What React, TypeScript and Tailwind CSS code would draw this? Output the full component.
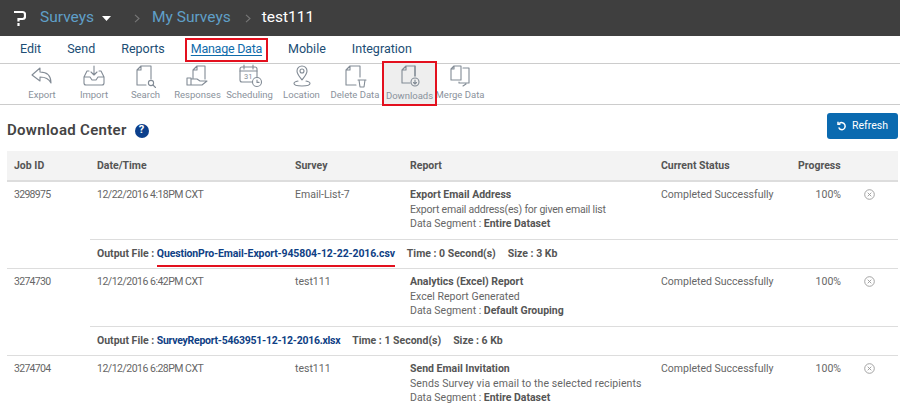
import React from "react";

const font = "font-['Roboto',sans-serif]";

function Ico({ children }: { children: React.ReactNode }) {
  return (
    <svg width="26" height="26" viewBox="0 0 26 26" fill="none" stroke="#828b95" strokeWidth="1.1" strokeLinejoin="round" strokeLinecap="round">
      {children}
    </svg>
  );
}

const tools: { label: string; icon: React.ReactNode; w: string }[] = [
  { label: "Export", w: "w-[52px]", icon: <Ico><path d="M11 5L3 12l8 6v-4c6 0 9 2 11 6 0-7-4-11-11-11z" /></Ico> },
  { label: "Import", w: "w-[52px]", icon: <Ico><path d="M8 8H6l-3 6v6a2 2 0 002 2h16a2 2 0 002-2v-6l-3-6h-2M3 14h6l2 3h4l2-3h6M13 3v9M10 9l3 3 3-3" /></Ico> },
  { label: "Search", w: "w-[51px]", icon: <Ico><path d="M8 3h10v13M8 3L4 7v15h9M8 3v4H4" /><circle cx="18" cy="20" r="2.6" /><path d="M20 22l2.500 2.500" /></Ico> },
  { label: "Responses", w: "w-[53px]", icon: <Ico><path d="M12 3h8v13M12 3l-4 4v8M12 3v4H8M2 15h4v7H2zM6 16h6l3 2h7l-5 4H6" /></Ico> },
  { label: "Scheduling", w: "w-[51px]", icon: <Ico><rect x="3" y="4" width="17" height="15" rx="2" /><path d="M3 8h17M7 2v4M16 2v4" /><circle cx="20" cy="19" r="4.500" fill="#fff" /><path d="M20 17v2.400h2" /><text x="7" y="16" fontSize="7.500" fill="#828b95" stroke="none">31</text></Ico> },
  { label: "Location", w: "w-[53px]", icon: <Ico><path d="M13 17c-3-4-5-6-5-9a5 5 0 0110 0c0 3-2 5-5 9z" /><circle cx="13" cy="8" r="2" /><path d="M9 18c-3 .6-4 1.500-4 2.500C5 22 9 23 13 23s8-1 8-2.500c0-1-1-1.900-4-2.500" /></Ico> },
  { label: "Delete Data", w: "w-[54px]", icon: <Ico><path d="M8 3h10v11M8 3L4 7v15h10M8 3v4H4M16 17h8M17 17l1 7h4l1-7" /></Ico> },
];

function Tool({ label, icon, w }: { label: string; icon: React.ReactNode; w: string }) {
  return (
    <div className={`${w} h-[40px] flex flex-col items-center shrink-0`}>
      <div className="h-[24px] flex items-center justify-center">{icon}</div>
      <span className="text-[9.500px] leading-[14px] text-[#8a929c] whitespace-nowrap">{label}</span>
    </div>
  );
}

function Tab({ children, boxed }: { children: string; boxed?: boolean }) {
  return boxed ? (
    <span className="border-[2px] border-[#e3101e] px-[4px] h-[24px] flex items-center text-[12.500px] tracking-[-0.25px] text-[#0f6cab] underline underline-offset-2 whitespace-nowrap">{children}</span>
  ) : (
    <span className="text-[12.500px] text-[#204d74]">{children}</span>
  );
}

function Chevron({ className }: { className: string }) {
  return (
    <svg className={className} width="6" height="9" viewBox="0 0 6 9" fill="none" stroke="#777" strokeWidth="1.100"><path d="M1 .8l4 3.700-4 3.700" /></svg>
  );
}

type R = { id: string; date: string; survey: string; title: string; desc: string; descT: string; seg: string; file: string; fileT: string; time: string; size: string; mark?: boolean };

const rows: R[] = [
  { id: "3298975", date: "12/22/2016 4:18PM CXT", survey: "Email-List-7", title: "Export Email Address", desc: "Export email address(es) for given email list", descT: "tracking-[-0.2px]", seg: "Entire Dataset", file: "QuestionPro-Email-Export-945804-12-22-2016.csv", fileT: "tracking-[-0.13px]", time: "0 Second(s)", size: "3 Kb", mark: true },
  { id: "3274730", date: "12/12/2016 6:42PM CXT", survey: "test111", title: "Analytics (Excel) Report", desc: "Excel Report Generated", descT: "tracking-[0.03px]", seg: "Default Grouping", file: "SurveyReport-5463951-12-12-2016.xlsx", fileT: "tracking-[-0.27px]", time: "1 Second(s)", size: "6 Kb" },
  { id: "3274704", date: "12/12/2016 6:28PM CXT", survey: "test111", title: "Send Email Invitation", desc: "Sends Survey via email to the selected recipients", descT: "tracking-[0.1px]", seg: "Entire Dataset", file: "", fileT: "", time: "", size: "" },
];

function Row({ r }: { r: R }) {
  return (
    <div className="flex border-b border-[#dddddd] text-[#666] text-[10.500px] leading-[14.500px]">
      <div className="w-[83px] pl-[7px] pt-[6px] shrink-0 tracking-[-0.7px]">{r.id}</div>
      <div className="flex-1">
        <div className="flex h-[57px] pt-[6px] pl-[7px]">
          <div className="w-[198px] shrink-0 tracking-[-0.5px]">{r.date}</div>
          <div className="w-[115px] shrink-0">{r.survey}</div>
          <div className="w-[251px] shrink-0">
            <div className="font-bold text-[#555]">{r.title}</div>
            <div className={r.descT}>{r.desc}</div>
            <div>Data Segment : <span className="font-bold text-[#555]">{r.seg}</span></div>
          </div>
          <div className="w-[137px] shrink-0">Completed Successfully</div>
          <div className="w-[43px] shrink-0 text-right">100%</div>
          <div className="pl-[23px] pt-[1px]">
            <svg width="11" height="11" viewBox="0 0 11 11" fill="none" stroke="#999" strokeWidth="0.900"><circle cx="5.500" cy="5.500" r="4.800" /><path d="M3.700 3.700l3.600 3.600M7.300 3.700l-3.600 3.600" /></svg>
          </div>
        </div>
        {r.file && (
          <div className="h-[29px] border-t border-[#dddddd] flex items-center pl-[7px] font-bold text-[#555] gap-[12px] whitespace-nowrap">
            <span>Output File : <span className={`text-[#0f3f85] relative ${r.fileT}`}>{r.file}{r.mark && <span className="absolute left-0 right-0 top-[18px] h-[2px] bg-[#e3101e]" />}</span></span>
            <span>Time : {r.time}</span>
            <span>Size : {r.size}</span>
          </div>
        )}
      </div>
    </div>
  );
}

export default function App() {
  return (
    <div className={`${font} w-[900px] h-[412px] overflow-hidden bg-white`}>
      <header className="h-[36px] bg-[#3f3f3f] flex items-center pl-[14px] text-[15.500px] text-[#5f9fc8]">
        <svg width="12" height="16" viewBox="0 0 12 16" fill="none" stroke="#fff" strokeWidth="2.200"><path d="M0 2h8.500a2.500 2.500 0 012.500 2.500v2A2.500 2.500 0 018.500 9H4.500v2.500" /><path d="M4.500 13v3" /></svg>
        <span className="ml-[14px]">Surveys</span>
        <svg className="ml-[8px]" width="9" height="5" viewBox="0 0 9 5" fill="#fff"><path d="M0 0h9L4.500 5z" /></svg>
        <Chevron className="ml-[23px]" />
        <span className="ml-[12px]">My Surveys</span>
        <Chevron className="ml-[14px]" />
        <span className="ml-[11px] text-white">test111</span>
      </header>
      <nav className="h-[28px] flex items-center border-b border-[#ccc] pl-[20px] gap-[26px]">
        <Tab>Edit</Tab>
        <Tab>Send</Tab>
        <Tab>Reports</Tab>
        <div className="-mx-[6px] flex"><Tab boxed>Manage Data</Tab></div>
        <Tab>Mobile</Tab>
        <Tab>Integration</Tab>
      </nav>
      <div className="h-[41px] border-b border-[#ccc] flex items-start pl-[16px]">
        {tools.map((t) => <Tool key={t.label} {...t} />)}
        <div className="w-[55px] h-[45px] border-[2px] border-[#e3101e] bg-[#eeeeee] flex flex-col items-center shrink-0 z-10 -mt-[3px]">
          <div className="h-[26px] flex items-center justify-center">
            <Ico><path d="M9 3h9v10M9 3L5 7v13h8M9 3v4H5" /><circle cx="18" cy="19" r="4" /><path d="M18 17v4M16.500 19.500l1.500 1.500 1.500-1.500M18 3v10" /></Ico>
          </div>
          <span className="text-[9.500px] leading-[14px] text-[#8a929c]">Downloads</span>
        </div>
        <Tool label="Merge Data" w="w-[46px]" icon={<Ico><path d="M7 3h7v14H4V6zM7 3v3H4M16 5h6v15H12v-1M19 21l-3 2" /></Ico>} />
      </div>
      <div className="flex items-center justify-between pl-[7px] pr-[2px] h-[46px]">
        <div className="flex items-center gap-[8px] pt-[5px]">
          <h1 className="text-[15px] font-semibold text-[#444] tracking-[0.3px]">Download Center</h1>
          <span className="w-[14px] h-[14px] rounded-full bg-[#0b3f8c] text-white text-[11px] font-bold flex items-center justify-center">?</span>
        </div>
        <button className="w-[71px] h-[26px] rounded-[3px] bg-[#0a6ab0] text-white text-[10.500px] flex items-center justify-center gap-[5px] -mt-[4px]">
          <svg width="10" height="10" viewBox="0 0 10 10" fill="none" stroke="#fff" strokeWidth="1.500"><path d="M2.200 2.500A3.600 3.600 0 115 8.800a3.600 3.600 0 01-3.300-2.300" /><path d="M1 .8v2.400h2.400" /></svg>
          Refresh
        </button>
      </div>
      <div className="ml-[7px] mr-[2px]">
        <div className="h-[31px] bg-[#f3f3f3] border-b-2 border-[#dddddd] flex items-center text-[10.500px] font-bold text-[#555]">
          <div className="w-[90px] pl-[7px]">Job ID</div>
          <div className="w-[198px]">Date/Time</div>
          <div className="w-[115px]">Survey</div>
          <div className="w-[251px]">Report</div>
          <div className="w-[137px]">Current Status</div>
          <div>Progress</div>
        </div>
        {rows.map((r) => <Row key={r.id} r={r} />)}
      </div>
    </div>
  );
}
